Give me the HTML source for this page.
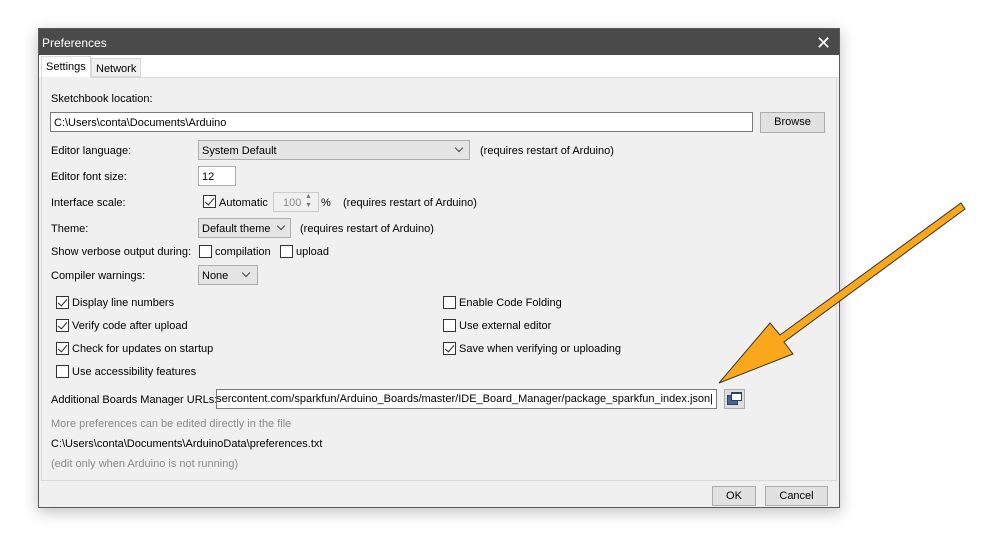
<!DOCTYPE html>
<html><head><meta charset="utf-8"><style>
body{margin:0;width:1006px;height:536px;background:#fff;position:relative;overflow:hidden;font-family:"Liberation Sans",sans-serif;font-size:11px;color:#000}
div,span{position:absolute;box-sizing:border-box}
.t{white-space:nowrap;line-height:14px;margin-top:1px}
.in{background:#fff;border:1px solid #7a7a7a}
.sel{background:#e5e5e5;border:1px solid #adadad}
.btn{background:#e1e1e1;border:1px solid #adadad;text-align:center;line-height:18px}
.cb{width:13px;height:13px;border:1px solid #333;background:#fff}
.ck::after{content:"";position:absolute;left:3px;top:0px;width:4px;height:8px;border:solid #222;border-width:0 1.5px 1.5px 0;transform:rotate(40deg)}
.chev{width:6px;height:6px;border:solid #444;border-width:0 1px 1px 0;transform:rotate(45deg)}
.g{color:#8a8a8a}
</style></head><body>
<div style="left:38px;top:28px;width:802px;height:480px;background:#f0f0f0;border:1px solid #5a5a5a;box-shadow:0 4px 14px rgba(0,0,0,.25)"></div>
<div style="left:39px;top:29px;width:800px;height:26px;background:#4a4a4a"></div>
<div class="t" style="left:42px;top:35px;color:#fff;font-size:12px">Preferences</div>
<div class="t" style="left:816px;top:32px;color:#fff;font-size:18px;line-height:20px">✕</div>
<div style="left:39px;top:55px;width:800px;height:22px;background:#fff"></div>
<div style="left:41px;top:56px;width:50px;height:22px;background:#fff;border:1px solid #d9d9d9;border-bottom:none"></div>
<div class="t" style="left:46px;top:59px">Settings</div>
<div style="left:91px;top:58px;width:50px;height:19px;background:#f0f0f0;border:1px solid #d9d9d9"></div>
<div class="t" style="left:96px;top:61px">Network</div>
<div style="left:41px;top:77px;width:796px;height:404px;background:#f0f0f0;border:1px solid #d9d9d9"></div>
<div style="left:42px;top:77px;width:48px;height:2px;background:#f0f0f0"></div>

<div class="t" style="left:51px;top:91px">Sketchbook location:</div>
<div class="in" style="left:50px;top:112px;width:703px;height:20px"></div>
<div class="t" style="left:54px;top:115px">C:\Users\conta\Documents\Arduino</div>
<div class="btn" style="left:760px;top:112px;width:65px;height:21px">Browse</div>

<div class="t" style="left:51px;top:143px">Editor language:</div>
<div class="sel" style="left:198px;top:140px;width:272px;height:20px"></div>
<div class="t" style="left:202px;top:143px">System Default</div>
<div class="chev" style="left:456px;top:145px"></div>
<div class="t" style="left:480px;top:143px">(requires restart of Arduino)</div>

<div class="t" style="left:51px;top:169px">Editor font size:</div>
<div class="in" style="left:198px;top:166px;width:38px;height:20px;border-color:#adadad"></div>
<div class="t" style="left:202px;top:169px">12</div>

<div class="t" style="left:51px;top:195px">Interface scale:</div>
<div class="cb ck" style="left:203px;top:195px"></div>
<div class="t" style="left:219px;top:195px">Automatic</div>
<div style="left:273px;top:192px;width:46px;height:20px;border:1px solid #ccc;background:#f0f0f0"></div>
<div class="t g" style="left:283px;top:195px">100</div>
<div class="t" style="left:305px;top:191px;font-size:7px;color:#777;line-height:9px">▲<br>▼</div>
<div class="t" style="left:321px;top:195px">%</div>
<div class="t" style="left:343px;top:195px">(requires restart of Arduino)</div>

<div class="t" style="left:51px;top:221px">Theme:</div>
<div class="sel" style="left:198px;top:218px;width:93px;height:20px"></div>
<div class="t" style="left:202px;top:221px">Default theme</div>
<div class="chev" style="left:278px;top:223px"></div>
<div class="t" style="left:300px;top:221px">(requires restart of Arduino)</div>

<div class="t" style="left:51px;top:244px">Show verbose output during:</div>
<div class="cb" style="left:199px;top:245px"></div>
<div class="t" style="left:215px;top:244px">compilation</div>
<div class="cb" style="left:280px;top:245px"></div>
<div class="t" style="left:296px;top:244px">upload</div>

<div class="t" style="left:51px;top:268px">Compiler warnings:</div>
<div class="sel" style="left:198px;top:265px;width:60px;height:20px"></div>
<div class="t" style="left:202px;top:268px">None</div>
<div class="chev" style="left:243px;top:270px"></div>

<div class="cb ck" style="left:56px;top:296px"></div><div class="t" style="left:72px;top:295px">Display line numbers</div>
<div class="cb ck" style="left:56px;top:319px"></div><div class="t" style="left:72px;top:318px">Verify code after upload</div>
<div class="cb ck" style="left:56px;top:342px"></div><div class="t" style="left:72px;top:341px">Check for updates on startup</div>
<div class="cb" style="left:56px;top:365px"></div><div class="t" style="left:72px;top:364px">Use accessibility features</div>
<div class="cb" style="left:443px;top:296px"></div><div class="t" style="left:459px;top:295px">Enable Code Folding</div>
<div class="cb" style="left:443px;top:319px"></div><div class="t" style="left:459px;top:318px">Use external editor</div>
<div class="cb ck" style="left:443px;top:342px"></div><div class="t" style="left:459px;top:341px">Save when verifying or uploading</div>

<div class="t" style="left:51px;top:392px">Additional Boards Manager URLs:</div>
<div class="in" style="left:216px;top:389px;width:501px;height:20px"></div>
<div style="left:217px;top:390px;width:499px;height:18px;overflow:hidden"><span class="t" style="right:3px;top:1px">usercontent.com/sparkfun/Arduino_Boards/master/IDE_Board_Manager/package_sparkfun_index.json|</span></div>
<div style="left:724px;top:389px;width:21px;height:20px;background:#ddd;border:1px solid #adadad"></div>
<div style="left:727px;top:395px;width:11px;height:10px;background:#4a6390;border:1px solid #2a3f66"></div>
<div style="left:731px;top:392px;width:11px;height:9px;background:#fff;border:1px solid #2a3f66;border-top-width:2px"></div>

<div class="t g" style="left:51px;top:416px">More preferences can be edited directly in the file</div>
<div class="t" style="left:51px;top:436px">C:\Users\conta\Documents\ArduinoData\preferences.txt</div>
<div class="t g" style="left:51px;top:456px">(edit only when Arduino is not running)</div>

<div class="btn" style="left:712px;top:486px;width:44px;height:20px">OK</div>
<div class="btn" style="left:765px;top:486px;width:63px;height:20px">Cancel</div>

<svg style="position:absolute;left:0;top:0" width="1006" height="536">
<polygon points="961,203 965,209 784,342 793,354 719,383 770,323 780,335" fill="#f9a81b" stroke="#333" stroke-width="1"/>
</svg>
</body></html>
